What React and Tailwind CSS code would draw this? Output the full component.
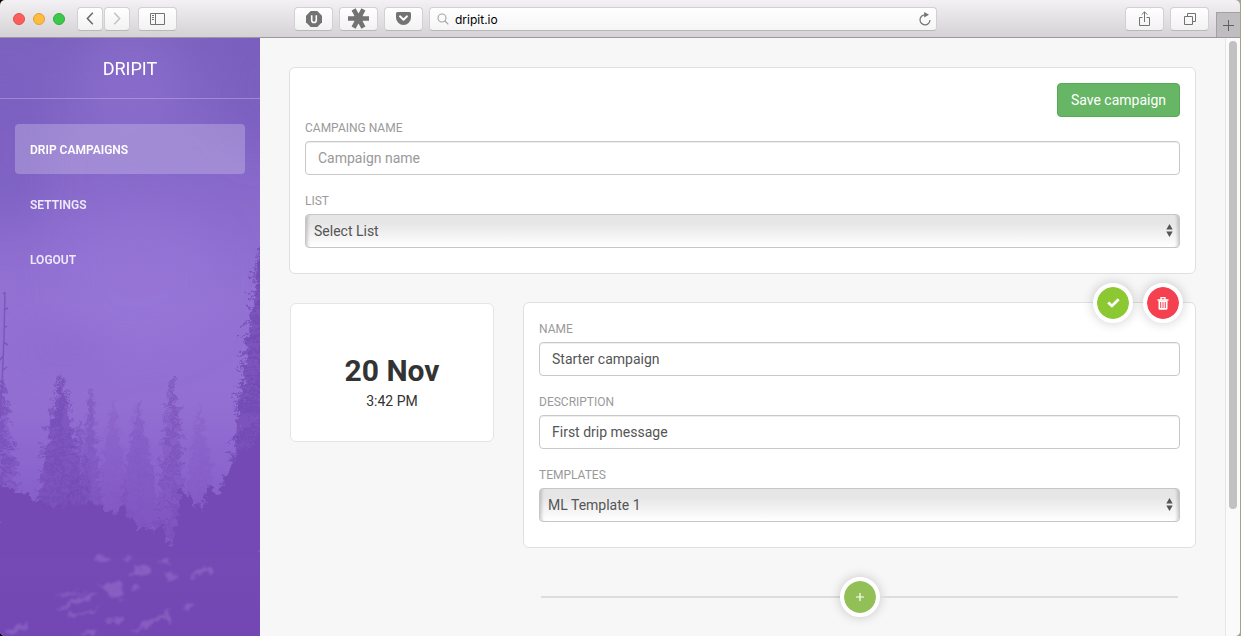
import React from "react";

function createRandom(seed) {
  let state = seed;
  return () => {
    state = (state * 16807) % 2147483647;
    return state / 2147483647;
  };
}

// Short drooping branches around a trunk; their length grows towards the foot.
function branchesPath(x, top, bottom, half, seed) {
  const random = createRandom(seed);
  let path = `M${x} ${top}V${bottom}`;
  for (let y = top + 3; y < bottom; y += 1.6) {
    const reach = half * Math.pow((y - top) / (bottom - top), 0.7);
    const side = random() > 0.5 ? 1 : -1;
    const length = (2 + reach) * (0.35 + random() * 0.75);
    const drop = 1 + random() * 4;
    path += `M${x} ${y.toFixed(1)}q${(side * length * 0.6).toFixed(1)} ${(-drop * 0.3).toFixed(1)} ${(side * length).toFixed(1)} ${drop.toFixed(1)}`;
  }
  return path;
}

// Filled body of a conifer.
function conifePoints(x, top, bottom, half) {
  return `M${x} ${top}C${x - half * 0.3} ${top + (bottom - top) * 0.3} ${x - half * 0.6} ${top + (bottom - top) * 0.4} ${x - half} ${bottom}H${x + half}C${x + half * 0.6} ${top + (bottom - top) * 0.4} ${x + half * 0.3} ${top + (bottom - top) * 0.3} ${x} ${top}Z`;
}

// Ragged outline that follows the given crest points down to the bottom edge.
function ridgePath(points, seed) {
  const random = createRandom(seed);
  let path = `M${points[0][0]} 700`;
  for (let i = 0; i < points.length - 1; i += 1) {
    const [x0, y0] = points[i];
    const [x1, y1] = points[i + 1];
    const steps = Math.max(2, Math.round(Math.hypot(x1 - x0, y1 - y0) / 2));
    for (let s = 0; s < steps; s += 1) {
      const t = s / steps;
      const x = x0 + (x1 - x0) * t + (random() - 0.5) * 2;
      const y = y0 + (y1 - y0) * t + (random() - 0.5) * 3;
      path += `L${x.toFixed(1)} ${y.toFixed(1)}`;
    }
  }
  const last = points[points.length - 1];
  return `${path}L${last[0]} ${last[1]}L${last[0]} 700Z`;
}

const trees = [
  { x: 200, top: 366, bottom: 490, half: 22, seed: 31, body: 0.12, twigs: 0.06 },
  { x: 113, top: 362, bottom: 480, half: 20, seed: 41, body: 0.14, twigs: 0.06 },
  { x: 139, top: 363, bottom: 490, half: 26, seed: 51, body: 0.24, twigs: 0.1 },
  { x: 91, top: 350, bottom: 480, half: 14, seed: 61, body: 0.3, twigs: 0.2 },
  { x: 172, top: 338, bottom: 500, half: 20, seed: 71, body: 0.26, twigs: 0.4 },
  { x: 2, top: 340, bottom: 480, half: 22, seed: 83, body: 0.25, twigs: 0.5 },
  { x: 61, top: 337, bottom: 500, half: 33, seed: 91, body: 0.55, twigs: 0.5 },
  { x: 80, top: 385, bottom: 490, half: 16, seed: 97, body: 0.25, twigs: 0.3 },
  { x: 262, top: 204, bottom: 500, half: 44, seed: 103, body: 0.7, twigs: 0.7 },
];

const leftRidge = [
  [-2, 449], [20, 453], [38, 464], [62, 469], [68, 468], [69, 446], [73, 468], [82, 467],
  [92, 463], [100, 467], [108, 474], [113, 472], [117, 478], [121, 464], [125, 467],
  [128, 480], [134, 480], [138, 494], [144, 488], [148, 487], [152, 496], [160, 486],
  [163, 486], [167, 502], [176, 516], [262, 520],
];

const rightRidge = [
  [168, 522], [175, 490], [179, 478], [180, 450], [183, 450], [187, 460], [192, 460],
  [194, 472], [199, 464], [203, 476], [205, 458], [210, 446], [214, 450], [217, 460],
  [222, 452], [226, 434], [234, 424], [244, 410], [262, 400],
];

const rocks = [
  "M94 523l8-4 7 2-2 4-7-1zM120 517l8 2 4 3-8-1z",
  "M128 538l8-8 9-3 9 6-4 4-10-2-6 4zM158 523l10 0 3 3-8 1z",
  "M163 536l9-1 9 5-10 2zM189 538l9-6 11-3 5 4-12 3-8 4z",
  "M98 548l14-5 12 3-2 6 4 7-8 3-11-7zM131 551l8-4 3 2-9 4z",
  "M60 570l18-10 17-6 4 0-10 8-15 5-8 4zM64 577l20-3 14-6-7 7-19 4z",
  "M52 556l36-3-14 4z",
  "M104 586l12-7 12 1-7 3zM128 597l12-8 10-10 14-1 8-8-4 11 5 4-16-3-15 11z",
  "M183 569l10-6-2 9zM82 595l8-3 5 2-4 4zM3 594l18-7 9-4-6 8-15 6z",
];

function ForestBackdrop() {
  return (
    <svg
      className="absolute inset-0 h-full w-full"
      viewBox="0 0 260 598"
      preserveAspectRatio="xMidYMin slice"
      aria-hidden="true"
    >
      <defs>
        <linearGradient id="sky" x1="0" y1="0" x2="0" y2="1">
          <stop offset="0" stopColor="#7c62c0" />
          <stop offset="0.2" stopColor="#886acb" />
          <stop offset="0.38" stopColor="#9372d4" />
          <stop offset="0.52" stopColor="#936fd3" />
          <stop offset="0.72" stopColor="#8459c6" />
          <stop offset="1" stopColor="#7346b4" />
        </linearGradient>
        <linearGradient id="ground" x1="0" y1="0" x2="0" y2="1">
          <stop offset="0" stopColor="#744ab4" />
          <stop offset="1" stopColor="#7343b3" />
        </linearGradient>
        <filter id="soft" x="-50%" y="-100%" width="200%" height="300%">
          <feGaussianBlur stdDeviation="20" />
        </filter>
        <filter id="foliage" x="-10%" y="-10%" width="120%" height="120%">
          <feTurbulence type="fractalNoise" baseFrequency="0.16" numOctaves="3" seed="4" />
          <feDisplacementMap in="SourceGraphic" scale="13" xChannelSelector="R" yChannelSelector="G" />
          <feGaussianBlur stdDeviation="0.4" />
        </filter>
        <filter id="rockTexture">
          <feTurbulence type="fractalNoise" baseFrequency="0.13" numOctaves="3" seed="9" />
          <feDisplacementMap in="SourceGraphic" scale="12" xChannelSelector="R" yChannelSelector="G" />
          <feGaussianBlur stdDeviation="0.9" />
        </filter>
      </defs>
      <rect width="260" height="700" fill="url(#sky)" />
      <g filter="url(#soft)">
        <ellipse cx="130" cy="40" rx="50" ry="60" fill="#9475d3" opacity="0.4" />
        <ellipse cx="6" cy="110" rx="46" ry="80" fill="#7659bd" opacity="0.5" />
        <ellipse cx="256" cy="50" rx="34" ry="70" fill="#755abc" opacity="0.5" />
        <ellipse cx="140" cy="240" rx="80" ry="70" fill="#9b7bdb" opacity="0.4" />
        <ellipse cx="60" cy="312" rx="50" ry="16" fill="#8661c9" opacity="0.4" />
      </g>
      <g filter="url(#foliage)">
        {trees.map((tree) => (
          <g key={tree.seed}>
            <path
              d={conifePoints(tree.x, tree.top, tree.bottom, tree.half * 0.8)}
              fill="#7249b2"
              opacity={tree.body}
            />
            <path
              d={branchesPath(tree.x, tree.top, tree.bottom, tree.half, tree.seed)}
              fill="none"
              stroke="#7148b1"
              strokeWidth="1.5"
              opacity={tree.twigs}
            />
          </g>
        ))}
      </g>
      <path
        d="M5 254L4 300 2 345 0 380M5 256l-2-1M4 272l4-2M4 290l3-2M3 304l5 3M3 318l-3 4M3 332l4-3"
        fill="none"
        stroke="#7850b8"
        strokeWidth="1.5"
        opacity="0.8"
      />
      <g filter="url(#foliage)">
        <path d={ridgePath(rightRidge, 17)} fill="#744ab5" />
        <path d={ridgePath(leftRidge, 29)} fill="#744ab4" />
      </g>
      <rect x="0" y="520" width="260" height="180" fill="url(#ground)" />
      <g fill="#946dcb" opacity="0.6" filter="url(#rockTexture)">
        {rocks.map((d) => (
          <path key={d} d={d} />
        ))}
      </g>
    </svg>
  );
}

function ToolbarButton({ label, narrow, children }) {
  return (
    <button
      type="button"
      aria-label={label}
      className={`${
        narrow ? "w-[26px]" : "w-[39px]"
      } flex h-6 shrink-0 items-center justify-center rounded border border-[#d2d0d2] border-b-[#b9b7b9] bg-linear-to-b from-white to-[#f3f2f3] text-[#737373]`}
    >
      {children}
    </button>
  );
}

function BrowserToolbar() {
  return (
    <header className="flex h-[38px] shrink-0 items-center border-b border-[#9b999b] bg-linear-to-b from-[#f3f1f3] to-[#d4d2d4] pl-[13px]">
      <div className="flex gap-2">
        <button type="button" aria-label="Close window" className="size-3 rounded-full border border-[#e2504b] bg-[#fc5f5b]" />
        <button type="button" aria-label="Minimize window" className="size-3 rounded-full border border-[#e0a034] bg-[#fdbc40]" />
        <button type="button" aria-label="Zoom window" className="size-3 rounded-full border border-[#33ad3d] bg-[#3ac94b]" />
      </div>
      <div className="ml-3 flex gap-px">
        <ToolbarButton label="Back" narrow>
          <svg width="8" height="13" viewBox="0 0 8 13" fill="none" stroke="#6b6b6b" strokeWidth="1.6">
            <path d="M6.8 .8 1.4 6.5l5.4 5.7" />
          </svg>
        </ToolbarButton>
        <ToolbarButton label="Forward" narrow>
          <svg width="8" height="13" viewBox="0 0 8 13" fill="none" stroke="#c4c4c4" strokeWidth="1.6">
            <path d="m1.2 .8 5.4 5.7-5.4 5.7" />
          </svg>
        </ToolbarButton>
      </div>
      <div className="ml-2">
        <ToolbarButton label="Show sidebar">
          <svg width="15" height="12" viewBox="0 0 15 12" fill="none" stroke="currentColor">
            <path d="M.5 .5h14v11H.5zM5.5 .5v11M2 2.500h2M2 4.500h2M2 6.500h2" />
          </svg>
        </ToolbarButton>
      </div>
      <div className="ml-[117px] flex flex-1 gap-1.5">
        <ToolbarButton label="Content blocker">
          <svg width="16" height="16" viewBox="0 0 16 16">
            <path d="M4.700 0h6.600L16 4.700v6.600L11.300 16H4.700L0 11.300V4.700z" fill="currentColor" />
            <path d="M5.700 4.200v5a2.300 2.300 0 0 0 4.600 0v-5" fill="none" stroke="#fff" strokeWidth="1.600" />
          </svg>
        </ToolbarButton>
        <ToolbarButton label="Password manager">
          <svg width="21" height="21" viewBox="0 0 21 21" className="shrink-0" fill="none" stroke="currentColor" strokeWidth="4.600">
            <path d="M0 10.500h21M5.600 1.300l9.800 18.400M15.400 1.300 5.600 19.700" />
            <circle cx="10.500" cy="10.500" r="2.500" />
          </svg>
        </ToolbarButton>
        <ToolbarButton label="Save to reading list">
          <svg width="15" height="13" viewBox="0 0 15 13">
            <path d="M1.500 0h12A1.500 1.500 0 0 1 15 1.500v4a7.500 7.500 0 0 1-15 0v-4A1.500 1.500 0 0 1 1.500 0z" fill="currentColor" />
            <path d="m4 4.300 3.500 3.400L11 4.300" fill="none" stroke="#fff" strokeWidth="1.900" strokeLinecap="round" strokeLinejoin="round" />
          </svg>
        </ToolbarButton>
        <div className="flex h-6 min-w-0 flex-1 items-center rounded border border-[#d2d0d2] border-b-[#b9b7b9] bg-linear-to-b from-white to-[#f6f5f6] pr-[5px] pl-[7px]">
          <svg width="12" height="12" viewBox="0 0 12 12" className="shrink-0" fill="none" stroke="#a3a3a3" strokeWidth="1.100">
            <circle cx="5" cy="5" r="4" />
            <path d="m8 8 3.300 3.300" />
          </svg>
          <input
            type="text"
            aria-label="Address"
            defaultValue="dripit.io"
            className="ml-1.5 min-w-0 flex-1 bg-transparent pt-0.5 font-[Inter,sans-serif] text-[12px] leading-4 text-black outline-none"
          />
          <button type="button" aria-label="Reload page" className="text-[#737373]">
            <svg width="12" height="14" viewBox="0 0 12 14">
              <path d="M6 2.800A5 5 0 1 0 11 8" fill="none" stroke="currentColor" strokeWidth="1.200" />
              <path d="M5.200 0 10 2.800 5.200 5.400z" fill="currentColor" />
            </svg>
          </button>
        </div>
      </div>
      <div className="ml-[188px] flex gap-1.5">
        <ToolbarButton label="Share">
          <svg width="11" height="16" viewBox="0 0 11 16" fill="none" stroke="currentColor">
            <path d="M3.500 6.500h-3v8h10v-8h-3M5.500 11V1M2.700 3.600 5.500 .8l2.800 2.800" />
          </svg>
        </ToolbarButton>
        <ToolbarButton label="Show all tabs">
          <svg width="12" height="12" viewBox="0 0 12 12" fill="none" stroke="currentColor">
            <path d="M.5 3.500h8v8h-8zM3.500 3V.5h8v8H9" />
          </svg>
        </ToolbarButton>
      </div>
      <button
        type="button"
        aria-label="New tab"
        className="ml-[7px] flex h-[25px] w-6 items-center justify-center self-end border-t border-l border-[#a3a1a3] bg-[#bfbdbf] text-[#606060]"
      >
        <svg width="11" height="11" viewBox="0 0 11 11" stroke="currentColor">
          <path d="M5.500 0v11M0 5.500h11" />
        </svg>
      </button>
    </header>
  );
}

function Sidebar() {
  return (
    <aside className="relative w-[260px] shrink-0 overflow-hidden bg-[#7346b4]">
      <ForestBackdrop />
      <div className="relative">
        <div className="border-b border-white/25 pt-4 pb-3.5 text-center text-[18px] leading-[30px] text-white">
          <a href="#home">DRIPIT</a>
        </div>
        <nav className="flex flex-col gap-[5px] px-[15px] pt-[25px] text-xs font-semibold text-white/85">
          <a href="#campaigns" className="flex h-[50px] items-center rounded bg-white/23 px-[15px] pt-0.5 text-white">
            DRIP CAMPAIGNS
          </a>
          <a href="#settings" className="flex h-[50px] items-center rounded px-[15px] pt-0.5">
            SETTINGS
          </a>
          <a href="#logout" className="flex h-[50px] items-center rounded px-[15px] pt-0.5">
            LOGOUT
          </a>
        </nav>
      </div>
    </aside>
  );
}

function FieldLabel({ htmlFor, children }) {
  return (
    <label htmlFor={htmlFor} className="mb-0.5 block text-xs leading-[22px] text-[#9a9a9a]">
      {children}
    </label>
  );
}

function TextField({ id, label, ...inputProps }) {
  return (
    <div className="mb-[15px]">
      <FieldLabel htmlFor={id}>{label}</FieldLabel>
      <input
        id={id}
        type="text"
        className="block h-[34px] w-full rounded border border-[#c9c9c9] bg-white px-3 text-sm text-[#555] shadow-[inset_0_1px_1px_rgba(0,0,0,0.075)] placeholder:text-[#999]"
        {...inputProps}
      />
    </div>
  );
}

function SelectField({ id, label, options }) {
  return (
    <div className="mb-[15px]">
      <FieldLabel htmlFor={id}>{label}</FieldLabel>
      <div className="relative">
        <select
          id={id}
          className="block h-[34px] w-full appearance-none rounded border border-[#c6c6c6] bg-linear-to-b from-[#e6e6e6] from-25% to-white px-2 text-sm text-[#555] shadow-[inset_5px_0_3px_-3px_rgba(0,0,0,0.16),inset_-5px_0_3px_-3px_rgba(0,0,0,0.16)]"
        >
          {options.map((option) => (
            <option key={option}>{option}</option>
          ))}
        </select>
        <svg
          width="7"
          height="13"
          viewBox="0 0 7 13"
          className="pointer-events-none absolute top-[10px] right-[7px]"
          fill="#555"
          aria-hidden="true"
        >
          <path d="M3.500 0 6.700 5.500H.3zM.3 7.500h6.400L3.500 13z" />
        </svg>
      </div>
    </div>
  );
}

function RoundButton({ label, color, children }) {
  return (
    <button
      type="button"
      aria-label={label}
      className={`${color} flex size-10 shrink-0 items-center justify-center rounded-full border-4 border-white bg-clip-padding text-white shadow-[0_0_12px_rgba(0,0,0,0.2)]`}
    >
      {children}
    </button>
  );
}

function CampaignCard() {
  return (
    <section className="rounded-md border border-[#e0e0e0] bg-white px-[15px] pt-[15px] pb-2.5">
      <div className="flex justify-end">
        <button type="button" className="h-[34px] rounded border border-[#58a957] bg-[#67b665] px-[13px] text-sm text-white">
          Save campaign
        </button>
      </div>
      <TextField id="campaign-name" label="CAMPAING NAME" placeholder="Campaign name" />
      <SelectField id="list" label="LIST" options={["Select List"]} />
    </section>
  );
}

function MessageCard() {
  return (
    <section className="relative rounded-md border border-[#e0e0e0] bg-white px-[15px] pt-[15px] pb-2.5">
      <div className="absolute -top-5 right-3 flex gap-2.5">
        <RoundButton label="Confirm message" color="bg-[#8cc832]">
          <svg width="13" height="10" viewBox="0 0 13 10" fill="none" stroke="currentColor" strokeWidth="2.800">
            <path d="m1.200 4.400 3.700 3.500L11.700 1.300" />
          </svg>
        </RoundButton>
        <RoundButton label="Delete message" color="bg-[#f5404f]">
          <svg width="12" height="13" viewBox="0 0 12 13">
            <path d="M.5 3h11M4 2.500V.6h4v1.900" fill="none" stroke="currentColor" strokeWidth="1.300" />
            <path
              d="M1.500 3.500h9v8a1.300 1.300 0 0 1-1.300 1.300H2.800a1.300 1.300 0 0 1-1.300-1.300zM3.200 5v6h1V5zm2.300 0v6h1V5zm2.300 0v6h1V5z"
              fill="currentColor"
              fillRule="evenodd"
            />
          </svg>
        </RoundButton>
      </div>
      <TextField id="message-name" label="NAME" defaultValue="Starter campaign" />
      <TextField id="description" label="DESCRIPTION" defaultValue="First drip message" />
      <SelectField id="templates" label="TEMPLATES" options={["ML Template 1"]} />
    </section>
  );
}

export default function App() {
  return (
    <div className="flex min-h-screen bg-linear-to-r from-black from-50% to-[#a7a28c] to-50% pr-px font-[Roboto,sans-serif]">
      <div className="flex min-w-0 flex-1 flex-col overflow-hidden rounded-[5px]">
        <BrowserToolbar />
        <div className="flex flex-1 bg-[#f7f7f7]">
          <Sidebar />
          <main className="min-w-0 flex-1 px-[29px] pt-[29px]">
            <CampaignCard />
            <div className="mt-7 flex items-start gap-[29px]">
              <div className="mt-px ml-px w-[204px] shrink-0 rounded-md border border-[#e5e5e5] bg-white pt-12 pb-[29px] text-center text-[#333]">
                <p className="text-[30px] leading-[38px] font-bold">20 Nov</p>
                <p className="text-sm leading-[22px]">3:42 PM</p>
              </div>
              <div className="min-w-0 flex-1">
                <MessageCard />
                <div className="mx-[18px] mt-[29px] flex items-center">
                  <div className="h-0.5 flex-1 bg-[#dddddd]" />
                  <RoundButton label="Add message" color="bg-[#92c057]">
                    <svg width="8" height="8" viewBox="0 0 8 8" stroke="currentColor" strokeWidth="1.200">
                      <path d="M4 0v8M0 4h8" />
                    </svg>
                  </RoundButton>
                  <div className="h-0.5 flex-1 bg-[#dddddd]" />
                </div>
              </div>
            </div>
          </main>
          <div className="flex w-[15px] shrink-0 justify-center border-l border-[#e6e6e6] bg-[#fafafa] py-[3px]">
            <div className="h-[79%] w-2 rounded-full bg-[#c1c1c1]" />
          </div>
        </div>
      </div>
    </div>
  );
}
